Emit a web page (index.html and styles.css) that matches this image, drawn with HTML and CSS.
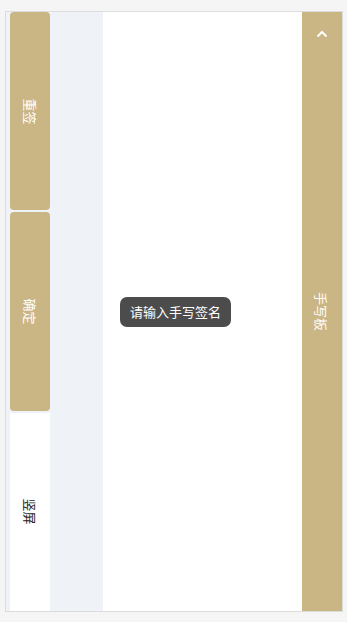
FILE: index.html
```html
<!doctype html>
<html lang="zh-CN">
<head>
  <meta charset="UTF-8">
  <meta name="viewport" content="width=device-width, initial-scale=1.0">
  <title>手写签名</title>
  <link rel="stylesheet" href="styles.css">
</head>
<body>

<div class="Sign">
  <div class="Sign-side">
    <div class="Sign-btn"><span class="Sign-label">重签</span></div>
    <div class="Sign-btn"><span class="Sign-label">确定</span></div>
    <div class="Sign-btn Sign-btn--plain"><span class="Sign-label">竖屏</span></div>
  </div>
  <div class="Sign-canvas"></div>
  <div class="Sign-bar">
    <svg class="Sign-arrow" width="12" height="8" viewBox="0 0 12 8">
      <polyline points="1.5,6.5 6,2 10.5,6.5" fill="none" stroke="#fff" stroke-width="2"/>
    </svg>
    <span class="Sign-label Sign-barLabel">手写板</span>
  </div>
  <div class="Sign-toast">请输入手写签名</div>
</div>

</body>
</html>
```

FILE: styles.css
```css
body {
  margin: 0;
  background-color: #f5f5f5;
  font-family: "Noto Sans CJK SC", "Noto Sans", sans-serif;
}

.Sign {
  position: relative;
  display: flex;
  box-sizing: border-box;
  width: 338px;
  height: 601px;
  margin: 11px 0 0 5px;
  border: 1px solid #dcdcdc;
  background-color: #fff;
}

.Sign-side {
  display: flex;
  flex-direction: column;
  gap: 2px;
  width: 97px;
  padding-left: 4px;
  box-sizing: border-box;
  background-color: #eff3f8;
}

.Sign-btn {
  display: flex;
  align-items: center;
  justify-content: center;
  width: 40px;
  flex: 1;
  border-radius: 4px;
  background-color: #cab584;
  color: #fff;
}

.Sign-btn--plain {
  border-radius: 0;
  background-color: #fff;
  color: #222;
}

.Sign-label {
  display: block;
  font-size: 13px;
  line-height: 1;
  white-space: nowrap;
  rotate: 90deg;
}

.Sign-canvas {
  width: 199px;
  background-color: #fff;
}

.Sign-bar {
  position: relative;
  display: flex;
  align-items: center;
  justify-content: center;
  flex: 1;
  background-color: #cab584;
  color: #fff;
}

.Sign-arrow {
  position: absolute;
  top: 18px;
  left: 14px;
}

.Sign-toast {
  position: absolute;
  top: 285px;
  left: 114px;
  padding: 0 10px;
  height: 30px;
  line-height: 30px;
  border-radius: 7px;
  background-color: #4c4c4c;
  color: #fff;
  font-size: 13px;
  white-space: nowrap;
}
```
